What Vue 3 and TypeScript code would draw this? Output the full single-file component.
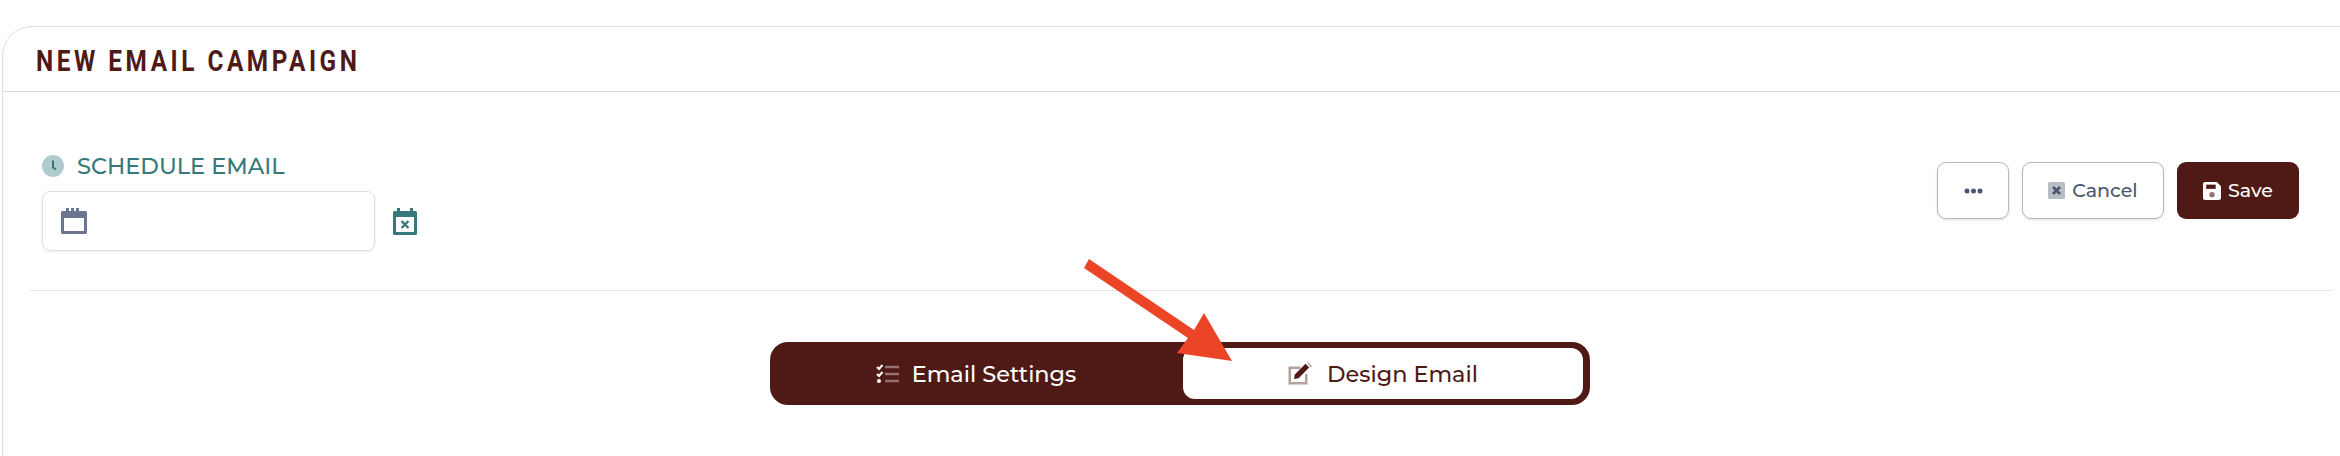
<script setup lang="ts">
const title = 'NEW EMAIL CAMPAIGN'
</script>

<template>
  <div class="page">
    <section class="card">
      <header class="card-head">
        <h1>{{ title }}</h1>
      </header>
      <div class="card-body">
        <div class="toolbar">
          <div class="schedule">
            <div class="schedule-label">
              <svg class="clock" viewBox="0 0 22 22" width="22" height="22">
                <circle cx="11" cy="11" r="11" fill="#aeccce" />
                <path d="M11 5.500V12.500L14 14.500" fill="none" stroke="#37797b" stroke-width="2" />
              </svg>
              <span>SCHEDULE EMAIL</span>
            </div>
            <div class="schedule-row">
              <div class="date-input">
                <svg viewBox="0 0 26 26" width="26" height="26">
                  <path d="M5 0h3v3h2V0h3v3h2V0h3v3h6.500a1.500 1.500 0 0 1 1.500 1.500v20a1.500 1.500 0 0 1-1.500 1.500H1.500A1.500 1.500 0 0 1 0 24.500v-20A1.500 1.500 0 0 1 1.500 3H5z" fill="#6c7590" />
                  <rect x="3" y="10" width="20" height="13" fill="#fff" />
                </svg>
              </div>
              <svg class="clear-date" viewBox="0 0 24 27" width="24" height="27">
                <path d="M4 0h3v3h10V0h3v3h2.500A1.500 1.500 0 0 1 24 4.500v21a1.500 1.500 0 0 1-1.500 1.500h-21A1.500 1.500 0 0 1 0 25.500v-21A1.500 1.500 0 0 1 1.500 3H4z" fill="#37797b" />
                <rect x="3" y="9" width="18" height="15" fill="#fff" />
                <path d="M8.500 13l7 7M15.500 13l-7 7" stroke="#37797b" stroke-width="2.400" />
              </svg>
            </div>
          </div>
          <div class="actions">
            <button class="btn btn-more" type="button">
              <svg viewBox="0 0 19 6" width="19" height="6">
                <circle cx="3" cy="3" r="2.500" fill="#49566f" />
                <circle cx="9.500" cy="3" r="2.500" fill="#49566f" />
                <circle cx="16" cy="3" r="2.500" fill="#49566f" />
              </svg>
            </button>
            <button class="btn btn-cancel" type="button">
              <svg viewBox="0 0 17 17" width="17" height="17">
                <rect width="17" height="17" rx="1.500" fill="#b8bdc6" />
                <path d="M5 5l7 7M12 5l-7 7" stroke="#49566f" stroke-width="2.600" />
              </svg>
              <span>Cancel</span>
            </button>
            <button class="btn btn-save" type="button">
              <svg viewBox="0 0 17 17" width="18" height="18">
                <path d="M2 0h11l4 4v11a2 2 0 0 1-2 2H2a2 2 0 0 1-2-2V2a2 2 0 0 1 2-2z" fill="#fff" />
                <rect x="3" y="2.500" width="9" height="4" fill="#4f1a16" />
                <circle cx="8.500" cy="12" r="2.500" fill="#96716e" />
              </svg>
              <span>Save</span>
            </button>
          </div>
        </div>
        <div class="tabs-wrap">
          <div class="tabs">
            <button class="tab tab-off" type="button">
              <svg viewBox="0 0 23 19" width="23" height="19">
                <path d="M1 3l2 2 3.500-4M1 10l2 2 3.500-4" fill="none" stroke="#fff" stroke-width="2" />
                <circle cx="3" cy="17" r="2" fill="#fff" />
                <path d="M9 3h14M9 10h14M9 17h14" stroke="#96716e" stroke-width="2.400" />
              </svg>
              <span>Email Settings</span>
            </button>
            <button class="tab tab-on" type="button">
              <svg viewBox="0 0 25 23" width="25" height="23">
                <path d="M1.500 4.500h11v2.500H3v13h14v-8h2.500v10.500H.500V4.500z" fill="#b5a09e" />
                <path d="M6 17l.8-4.500L17.500 1.800l3.700 3.700L10.500 16.200z" fill="#4f1a16" />
                <path d="M19 .8l.9-.8 4.100 4-1.300 1.500z" fill="#b5a09e" />
              </svg>
              <span>Design Email</span>
            </button>
          </div>
          <svg class="arrow" viewBox="0 0 160 120" width="160" height="120">
            <path d="M9 8L114 79 124 62 152 110 97 102 108 87 4 17z" fill="#ec4426" />
          </svg>
        </div>
      </div>
    </section>
  </div>
</template>

<style>
html, body { background: #fff; margin: 0; }
</style>

<style scoped>
.page {
  width: 2340px;
  height: 456px;
  overflow: hidden;
  padding: 26px 0 0 2px;
  box-sizing: border-box;
  background: #fff;
  font-family: Montserrat, Inter, "Open Sans", sans-serif;
}
.card {
  width: 2380px;
  height: 460px;
  box-sizing: border-box;
  border: 1px solid #dedede;
  border-radius: 30px 0 0 0;
}
.card-head {
  height: 65px;
  box-sizing: border-box;
  border-bottom: 1px solid #dedede;
  padding: 5px 0 0 33px;
  display: flex;
  align-items: center;
}
h1 {
  margin: 0;
  transform-origin: left center;
  transform: scaleX(0.84);
  font: 700 29px/1 Roboto, sans-serif;
  letter-spacing: 4.2px;
  white-space: nowrap;
  color: #4f1a16;
}
.card-body {
  width: 2329px;
  padding: 0 0 0 27px;
  box-sizing: border-box;
}
.toolbar {
  height: 199px;
  box-sizing: border-box;
  border-bottom: 1px solid #e6e6e6;
  display: flex;
  justify-content: space-between;
  padding: 61px 33px 0 12px;
}
.schedule-label {
  display: flex;
  align-items: center;
  gap: 13px;
  height: 26px;
  font-size: 22.5px;
  font-weight: 500;
  color: #37797b;
}
.schedule-row {
  display: flex;
  align-items: center;
  margin-top: 12px;
  gap: 18px;
}
.date-input {
  width: 333px;
  height: 60px;
  box-sizing: border-box;
  border: 1px solid #dfdfdf;
  border-radius: 8px;
  box-shadow: 0 1px 3px rgba(0, 0, 0, 0.08);
  padding-left: 18px;
  display: flex;
  align-items: center;
}
.actions {
  display: flex;
  gap: 13px;
  height: 57px;
  margin-top: 9px;
}
.btn {
  height: 57px;
  box-sizing: border-box;
  border-radius: 9px;
  font: 500 19px Montserrat, Inter, sans-serif;
  display: flex;
  align-items: center;
  justify-content: center;
  gap: 7px;
  padding: 0;
}
.btn-more, .btn-cancel {
  background: #fff;
  border: 1px solid #b5b8c6;
  color: #49566f;
  box-shadow: 0 1px 3px rgba(0, 0, 0, 0.12);
}
.btn-more { width: 72px; }
.btn-cancel { width: 142px; }
.btn-save {
  width: 122px;
  border: 0;
  background: #4f1a16;
  color: #fff;
}
.tabs-wrap {
  position: relative;
  padding: 51px 0 0 740px;
}
.tabs {
  width: 820px;
  height: 63px;
  background: #4f1a16;
  border-radius: 18px;
  box-sizing: border-box;
  padding: 6px 7px;
  display: flex;
  font-size: 22.4px;
  font-weight: 500;
}
.tab {
  border: 0;
  background: transparent;
  font: inherit;
  display: flex;
  align-items: center;
  justify-content: center;
  padding: 0;
}
.tab-off {
  width: 406px;
  padding-right: 8px;
  color: #fff;
  gap: 13px;
}
.tab-on {
  width: 400px;
  background: #fff;
  color: #4f1a16;
  border-radius: 12px;
  gap: 14px;
}
.arrow {
  position: absolute;
  left: 1050px;
  top: -40px;
  pointer-events: none;
}
</style>
